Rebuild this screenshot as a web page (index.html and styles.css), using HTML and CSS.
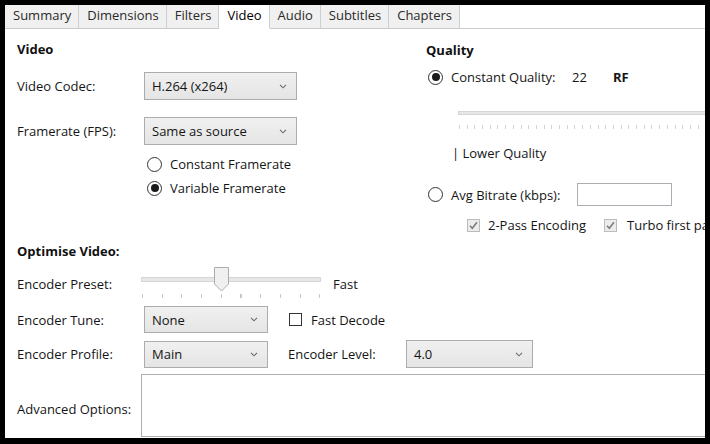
FILE: index.html
```html
<!DOCTYPE html>
<html>
<head>
<meta charset="utf-8">
<link rel="stylesheet" href="styles.css">
</head>
<body>
<div class="window">
  <div class="tabs">
    <div class="tab">Summary</div>
    <div class="tab">Dimensions</div>
    <div class="tab">Filters</div>
    <div class="tab active">Video</div>
    <div class="tab">Audio</div>
    <div class="tab">Subtitles</div>
    <div class="tab">Chapters</div>
    <div class="tab-fill"></div>
  </div>
  <div class="content">
    <div class="top">
      <div class="col-left">
        <div class="heading h-video">Video</div>
        <div class="row row-codec">
          <span class="label">Video Codec:</span>
          <div class="combo w153"><span>H.264 (x264)</span><svg class="chev" width="8" height="5" viewBox="0 0 8 5"><path d="M1 0.8 L4 3.8 L7 0.8" fill="none" stroke="#6a6a6a" stroke-width="1.1"/></svg></div>
        </div>
        <div class="row row-fps">
          <span class="label">Framerate (FPS):</span>
          <div class="combo w153"><span>Same as source</span><svg class="chev" width="8" height="5" viewBox="0 0 8 5"><path d="M1 0.8 L4 3.8 L7 0.8" fill="none" stroke="#6a6a6a" stroke-width="1.1"/></svg></div>
        </div>
        <div class="radios">
          <div class="radio-row"><span class="radio"></span><span>Constant Framerate</span></div>
          <div class="radio-row"><span class="radio on"></span><span>Variable Framerate</span></div>
        </div>
      </div>
      <div class="col-right">
        <div class="heading h-quality">Quality</div>
        <div class="cq-row">
          <span class="radio on"></span>
          <span class="cq-label">Constant Quality:</span>
          <span class="cq-val">22</span>
          <span class="bold">RF</span>
        </div>
        <div class="q-track"></div>
        <div class="q-ticks"></div>
        <div class="lower">| Lower Quality</div>
        <div class="ab-row">
          <span class="radio"></span>
          <span class="ab-label">Avg Bitrate (kbps):</span>
          <span class="textbox"></span>
        </div>
        <div class="cb-row">
          <span class="check dis"><svg width="11" height="11" viewBox="0 0 11 11"><path d="M2 5.8 L4.3 8.2 L9 2.3" fill="none" stroke="#7d7d7d" stroke-width="1.6"/></svg></span>
          <span class="cb-text">2-Pass Encoding</span>
          <span class="check dis"><svg width="11" height="11" viewBox="0 0 11 11"><path d="M2 5.8 L4.3 8.2 L9 2.3" fill="none" stroke="#7d7d7d" stroke-width="1.6"/></svg></span>
          <span class="cb-text2">Turbo first pass</span>
        </div>
      </div>
    </div>

    <div class="heading h-opt">Optimise Video:</div>
    <div class="row row-preset">
      <span class="label">Encoder Preset:</span>
      <div class="slider">
        <div class="s-track"></div>
        <svg class="s-thumb" width="15" height="25" viewBox="0 0 15 25"><path d="M0.5 0.5 H14.5 V17 L7.5 24 L0.5 17 Z" fill="#f0f0f0" stroke="#acacac"/></svg>
        <div class="s-ticks"></div>
      </div>
      <span class="fast">Fast</span>
    </div>
    <div class="row row-tune">
      <span class="label">Encoder Tune:</span>
      <div class="combo w124"><span>None</span><svg class="chev" width="8" height="5" viewBox="0 0 8 5"><path d="M1 0.8 L4 3.8 L7 0.8" fill="none" stroke="#6a6a6a" stroke-width="1.1"/></svg></div>
      <span class="check fd"></span>
      <span class="fd-text">Fast Decode</span>
    </div>
    <div class="row row-profile">
      <span class="label">Encoder Profile:</span>
      <div class="combo w124"><span>Main</span><svg class="chev" width="8" height="5" viewBox="0 0 8 5"><path d="M1 0.8 L4 3.8 L7 0.8" fill="none" stroke="#6a6a6a" stroke-width="1.1"/></svg></div>
      <span class="lvl-label">Encoder Level:</span>
      <div class="combo w127"><span>4.0</span><svg class="chev" width="8" height="5" viewBox="0 0 8 5"><path d="M1 0.8 L4 3.8 L7 0.8" fill="none" stroke="#6a6a6a" stroke-width="1.1"/></svg></div>
    </div>
    <div class="row row-adv">
      <span class="label adv-label">Advanced Options:</span>
      <div class="textarea"></div>
    </div>
  </div>
</div>
</body>
</html>
```
FILE: styles.css
```css
* { box-sizing: border-box; }
html, body { margin: 0; padding: 0; background: #000; }
body {
  font-family: "Open Sans", "Noto Sans", sans-serif;
  font-size: 13px;
  color: #151515;
  width: 710px;
  height: 444px;
  padding: 5px 5px 6px 5px;
}
.window {
  width: 700px;
  height: 433px;
  background: #fff;
  overflow: hidden;
  display: flex;
  flex-direction: column;
}
.tabs {
  display: flex;
  height: 24px;
  flex: none;
}
.tab {
  height: 24px;
  padding: 0 7px 0 8px;
  line-height: 21px;
  background: #f0f0f0;
  border-right: 1px solid #cfcfcf;
  border-bottom: 1px solid #cbcbcb;
  color: #2a2a2a;
  white-space: nowrap;
}
.tab.active {
  background: #fff;
  border-bottom-color: #fff;
  color: #000;
}
.tab-fill {
  flex: 1;
  border-bottom: 1px solid #cbcbcb;
}
.content {
  padding-left: 12px;
  display: flex;
  flex-direction: column;
  flex: 1;
}
.heading { font-weight: 700; height: 18px; line-height: 18px; color: #111; }
.bold { font-weight: 700; }
.top { display: flex; height: 205px; flex: none; }
.col-left { width: 409px; flex: none; display: flex; flex-direction: column; }
.col-right { flex: 1; min-width: 0; display: flex; flex-direction: column; white-space: nowrap; }
.h-video { margin-top: 11px; }
.row { display: flex; align-items: center; white-space: nowrap; }
.label { width: 127px; flex: none; }
.row-codec { margin-top: 14px; height: 28px; }
.row-fps { margin-top: 17px; height: 28px; }
.combo {
  height: 28px;
  border: 1px solid #acacac;
  background: linear-gradient(#f0f0f0, #e5e5e5);
  display: flex;
  align-items: center;
  justify-content: space-between;
  padding: 0 9px 0 7px;
  flex: none;
}
.w153 { width: 153px; }
.w124 { width: 124px; height: 27px; }
.w127 { width: 127px; height: 28px; }
.chev { display: block; }
.radios { margin-top: 7px; margin-left: 130px; }
.radio-row { display: flex; align-items: center; height: 24px; }
.radio {
  width: 15px; height: 15px;
  border: 1px solid #333;
  border-radius: 50%;
  background: #fff;
  flex: none;
  margin-right: 8px;
  display: flex;
  align-items: center;
  justify-content: center;
}
.radio.on::after {
  content: "";
  width: 8px; height: 8px;
  border-radius: 50%;
  background: #1a1a1a;
}
.h-quality { margin-top: 12px; }
.cq-row { display: flex; align-items: center; height: 20px; margin-top: 8px; margin-left: 2px; }
.cq-label { width: 121px; flex: none; }
.cq-val { width: 41px; flex: none; }
.q-track {
  margin-top: 24px;
  margin-left: 32px;
  height: 4px;
  background: #e7e7e7;
  border: 1px solid #d6d6d6;
  width: 400px;
  flex: none;
}
.q-ticks {
  margin-top: 10px;
  margin-left: 33px;
  height: 4px;
  width: 400px;
  flex: none;
  background: repeating-linear-gradient(90deg, #d2d2d2 0 1px, transparent 1px 7.7px);
}
.lower { margin-top: 15px; margin-left: 26px; height: 18px; line-height: 18px; }
.ab-row { display: flex; align-items: center; margin-top: 21px; margin-left: 2px; height: 23px; }
.ab-label { width: 126px; flex: none; }
.textbox { width: 95px; height: 23px; border: 1px solid #abadb3; background: #fff; flex: none; }
.cb-row { display: flex; align-items: center; margin-top: 10px; margin-left: 41px; height: 18px; }
.check {
  width: 12px; height: 12px;
  border: 1px solid #333;
  background: #fff;
  flex: none;
  display: flex; align-items: center; justify-content: center;
}
.check svg { display: block; }
.check.dis { width: 13px; height: 13px; border-color: #bcbcbc; background: #ececec; }
.cb-text { margin-left: 8px; width: 116px; flex: none; }
.cb-text2 { margin-left: 10px; }
.h-opt { margin-top: 8px; }
.row-preset { margin-top: 6px; height: 32px; }
.row-preset .label { padding-top: 4px; }
.slider { position: relative; width: 180px; height: 32px; margin-left: -3px; flex: none; }
.s-track {
  position: absolute; left: 0; top: 11px;
  width: 180px; height: 5px;
  background: #e7e7e7; border: 1px solid #d6d6d6;
}
.s-thumb { position: absolute; left: 73px; top: 1px; display: block; }
.s-ticks {
  position: absolute; left: 1px; top: 28px;
  width: 180px; height: 4px;
  background: repeating-linear-gradient(90deg, #c8c8c8 0 1px, transparent 1px 19.7px);
}
.fast { margin-left: 12px; padding-top: 4px; }
.row-tune { margin-top: 8px; height: 27px; }
.fd { margin-left: 21px; width: 13px; height: 13px; }
.fd-text { margin-left: 9px; }
.row-profile { margin-top: 7px; height: 28px; }
.lvl-label { margin-left: 20px; width: 118px; flex: none; }
.row-adv { margin-top: 6px; height: 63px; }
.adv-label { width: 124px; padding-top: 6px; }
.textarea { width: 600px; height: 63px; border: 1px solid #abadb3; background: #fff; flex: none; }
```
